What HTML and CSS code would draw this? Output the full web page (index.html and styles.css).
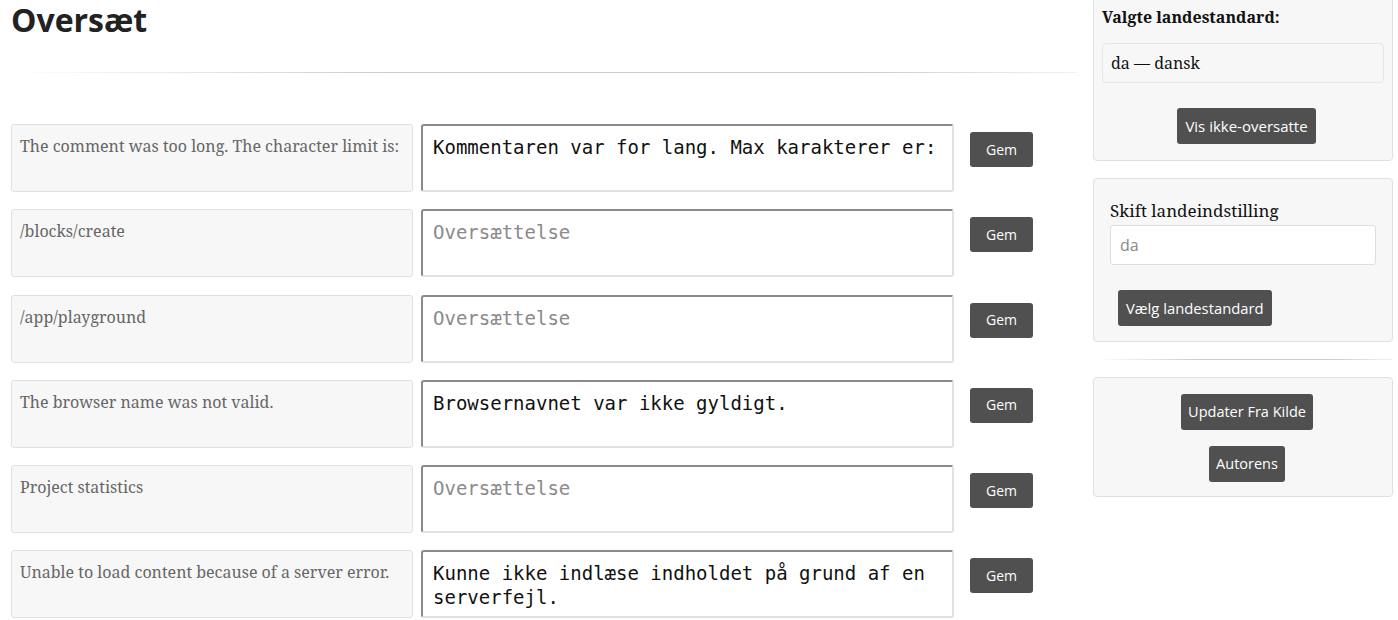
FILE: index.html
```html
<!DOCTYPE html>
<html>
  <head>
    <title>Oversæt</title>
    <link rel="stylesheet" href="styles.css">
  </head>
  <body>
    <div id="page">
      <div id="main">
        <h1>Oversæt</h1>
        <hr class="fade">
        <div id="rows">
          <div class="row">
            <div class="source">The comment was too long. The character limit is:</div>
            <textarea class="target" placeholder="Oversættelse">Kommentaren var for lang. Max karakterer er:</textarea>
            <button class="btn">Gem</button>
          </div>
          <div class="row">
            <div class="source">/blocks/create</div>
            <textarea class="target" placeholder="Oversættelse"></textarea>
            <button class="btn">Gem</button>
          </div>
          <div class="row">
            <div class="source">/app/playground</div>
            <textarea class="target" placeholder="Oversættelse"></textarea>
            <button class="btn">Gem</button>
          </div>
          <div class="row">
            <div class="source">The browser name was not valid.</div>
            <textarea class="target" placeholder="Oversættelse">Browsernavnet var ikke gyldigt.</textarea>
            <button class="btn">Gem</button>
          </div>
          <div class="row">
            <div class="source">Project statistics</div>
            <textarea class="target" placeholder="Oversættelse"></textarea>
            <button class="btn">Gem</button>
          </div>
          <div class="row">
            <div class="source">Unable to load content because of a server error.</div>
            <textarea class="target" placeholder="Oversættelse">Kunne ikke indlæse indholdet på grund af en serverfejl.</textarea>
            <button class="btn">Gem</button>
          </div>
        </div>
      </div>
      <div id="sidebar">
        <div class="panel current">
          <div class="panel-title">Valgte landestandard:</div>
          <div class="locale">da — dansk</div>
          <div class="center"><button class="btn">Vis ikke-oversatte</button></div>
        </div>
        <div class="panel switch">
          <label for="locale">Skift landeindstilling</label>
          <input type="text" id="locale" placeholder="da">
          <button class="btn indent">Vælg landestandard</button>
        </div>
        <hr class="fade side">
        <div class="panel tools">
          <button class="btn">Updater Fra Kilde</button>
          <button class="btn">Autorens</button>
        </div>
      </div>
    </div>
  </body>
</html>
```

FILE: styles.css
```css
body {
  margin: 0;
  font-family: "Noto Serif", "DejaVu Serif", serif;
  color: #222;
  background: #fff;
}
#page {
  display: flex;
  align-items: flex-start;
}
#main {
  width: 1067px;
  padding-left: 10px;
}
h1 {
  margin: 0;
  padding: 0 0 0 1px;
  font-family: "Open Sans", "Noto Sans", sans-serif;
  font-size: 32px;
  font-weight: 700;
  line-height: 40px;
  color: #222;
}
hr.fade {
  border: 0;
  height: 1px;
  margin: 32px 0 0;
  background: linear-gradient(to right, rgba(0, 0, 0, 0), rgba(0, 0, 0, 0.2) 35%, rgba(0, 0, 0, 0.2) 80%, rgba(0, 0, 0, 0.05));
}
#rows {
  display: flex;
  flex-direction: column;
  gap: 17.25px;
  margin-top: 51px;
}
.row {
  display: flex;
  align-items: flex-start;
  height: 68px;
}
.source {
  box-sizing: border-box;
  width: 402px;
  height: 68px;
  margin-left: 1px;
  padding: 9px 8px;
  background: #f7f7f7;
  border: 1px solid #e0e0e0;
  border-radius: 3px;
  color: #666;
  font-size: 16px;
  line-height: 24px;
}
.target {
  box-sizing: border-box;
  width: 533px;
  height: 68px;
  margin-left: 8px;
  padding: 9px 10px 8px;
  border: 2px solid;
  border-color: #8a8a8a #e2e2e2 #e2e2e2 #8a8a8a;
  border-radius: 3px;
  font-family: "DejaVu Sans Mono", monospace;
  font-size: 19px;
  line-height: 24px;
  color: #111;
  resize: none;
  overflow: hidden;
}
.target::placeholder {
  color: #8a8a8a;
}
.btn {
  border: 0;
  border-radius: 3px;
  background: #505050;
  color: #fff;
  font-family: "Open Sans", "Noto Sans", sans-serif;
  font-size: 15px;
  line-height: 20px;
  padding: 8px 8px;
  cursor: pointer;
}
.row .btn {
  width: 63px;
  height: 35px;
  margin: 8px 0 0 16px;
  padding: 0;
  font-size: 14px;
}
#sidebar {
  width: 300px;
  margin-left: 16px;
  margin-top: -12px;
  display: flex;
  flex-direction: column;
  gap: 17px;
}
.panel {
  background: #f7f7f7;
  border: 1px solid #e0e0e0;
  border-radius: 4px;
}
.current {
  padding: 16px 8px 16px;
}
.panel-title {
  font-weight: 700;
  font-size: 16px;
  line-height: 24px;
  color: #111;
}
.locale {
  margin-top: 14px;
  padding: 7px 8px;
  border: 1px solid #e6e6e6;
  border-radius: 4px;
  font-size: 16px;
  line-height: 24px;
  color: #111;
}
.center {
  text-align: center;
  margin-top: 25px;
  padding-left: 7px;
}
.switch {
  padding: 21px 16px 15px;
  display: flex;
  flex-direction: column;
  align-items: flex-start;
}
.switch label {
  font-size: 17px;
  line-height: 22px;
  color: #111;
}
.switch input {
  box-sizing: border-box;
  width: 266px;
  height: 40px;
  margin-top: 3px;
  padding: 0 9px;
  border: 1px solid #ddd;
  border-radius: 3px;
  font-family: "Open Sans", "Noto Sans", sans-serif;
  font-size: 16px;
}
.switch input::placeholder {
  color: #888;
}
.btn.indent {
  margin: 25px 0 0 8px;
  font-size: 14.8px;
}
hr.side {
  margin: 0 0 0 2px;
}
.tools {
  padding: 16px 0 14px 8px;
  display: flex;
  flex-direction: column;
  align-items: center;
  gap: 16px;
}
.tools .btn {
  font-size: 14.5px;
  padding: 8px 7px;
}
```
